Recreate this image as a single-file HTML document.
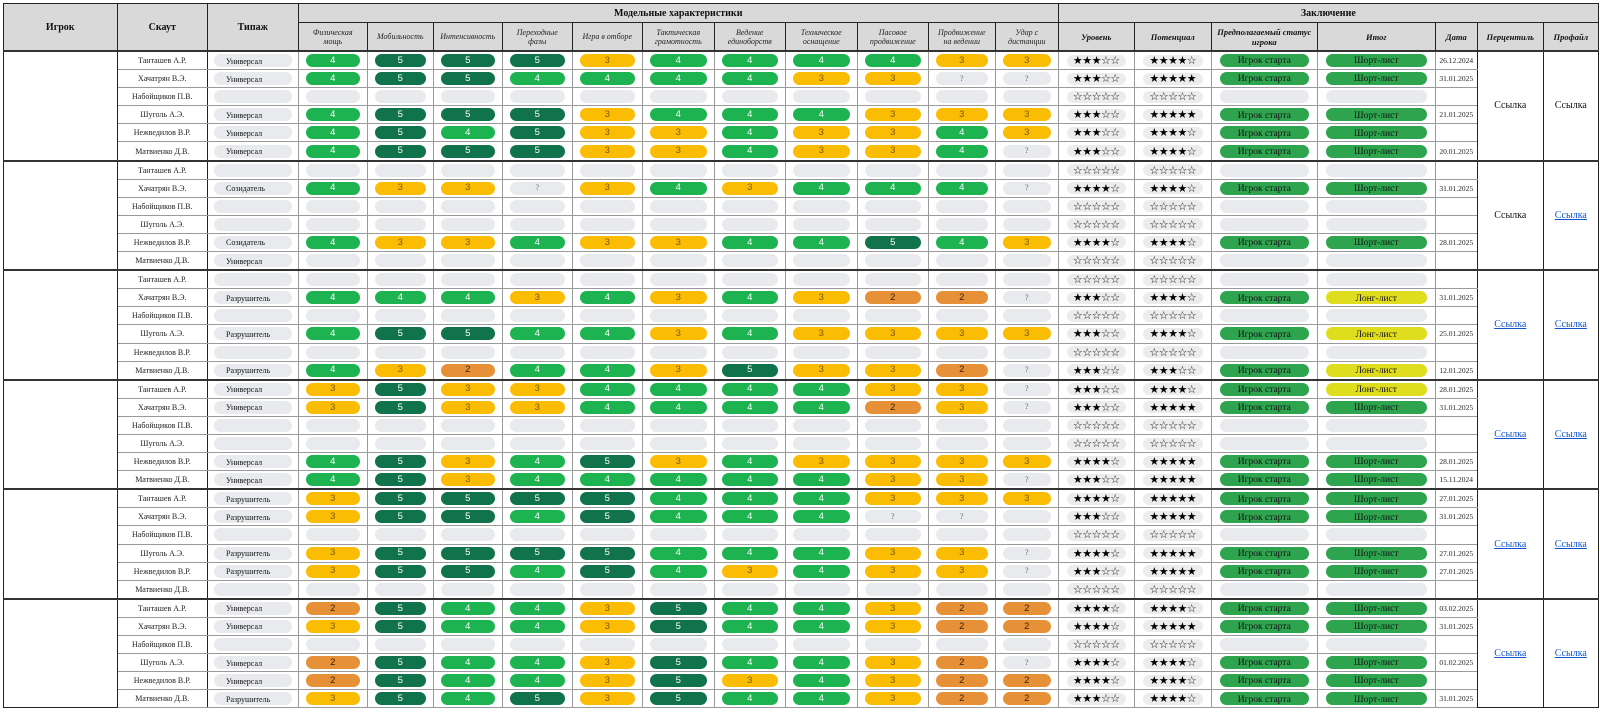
<!DOCTYPE html>
<html><head><meta charset="utf-8"><style>
html,body{margin:0;padding:0;background:#fff;width:1600px;height:712px;overflow:hidden}
table{position:absolute;left:3px;top:3px;border-collapse:collapse;table-layout:fixed;width:1594px;font-family:"Liberation Serif",serif;color:#111}
td,th{border:1px solid #9a9a9a;padding:0;text-align:center;vertical-align:middle;overflow:hidden;white-space:nowrap}
th{background:#d9d9d9;border:1px solid #222;font-weight:bold;font-size:10px}
th.h1{height:18px}
th.s{font-style:italic;font-weight:normal;font-size:8px;line-height:9px;white-space:normal;color:#222;height:27px;padding:0 5px}
th.sb{font-style:italic;font-weight:bold;font-size:8.5px;line-height:10px;white-space:normal;height:27px;padding:0 4px}
tr.r td{height:17.1px}
td.n{font-size:8px;color:#222;border-left:1px solid #222;border-right:1px solid #222}
td.dt{font-size:7.5px;color:#222;border-right:1px solid #222;border-left:1px solid #222}
td.big{border:1px solid #222;font-size:10px;background:#fff}
td.big a{color:#1155cc;text-decoration:underline}
tr.g td{border-top:2px solid #333}
i,u,b.s{display:flex;align-items:center;justify-content:center;box-sizing:border-box}
i{margin:0 7px;height:13px;border-radius:7px;font-style:normal;font-size:9.5px;line-height:1;font-family:"Liberation Sans",sans-serif;color:#fff}
i.e{background:#e8eaed;color:#666;font-family:"Liberation Serif",serif;font-size:8px}
i.c5{background:#11734b}
i.c4{background:#1db351}
i.c3{background:#fbbc04;color:#7a5a00}
i.c2{background:#e69138;color:#3a2000}
i.t{background:#e8eaed;color:#111;justify-content:flex-start;padding-left:12px;padding-top:2px;font-family:"Liberation Serif",serif;font-size:8px;margin:0 6px}
b.s{margin:0 8px;height:12px;border-radius:7px;background:#ececec;font-weight:normal;font-size:11px;line-height:1;color:#000;letter-spacing:-0.5px;font-family:"DejaVu Sans",sans-serif}
u{margin:0 8px;height:13px;border-radius:7px;text-decoration:none;font-size:9.5px;line-height:1;color:#111;padding-top:3px}
u.is,u.sh{background:#2ea44f}
u.ln{background:#e0dd1f}
u.e{background:#e8eaed}
</style></head><body>
<table>
<colgroup>
<col style="width:113.5px"><col style="width:90.5px"><col style="width:90.5px">
<col style="width:69.5px"><col style="width:65.5px"><col style="width:69.5px"><col style="width:69.5px"><col style="width:70.5px"><col style="width:71.5px"><col style="width:71.5px"><col style="width:71.5px"><col style="width:71.5px"><col style="width:66.5px"><col style="width:63.5px">
<col style="width:75.5px"><col style="width:77.5px"><col style="width:105.5px"><col style="width:118.5px"><col style="width:41.5px"><col style="width:66.5px"><col style="width:54.5px">
</colgroup>
<tr><th rowspan="2">Игрок</th><th rowspan="2">Скаут</th><th rowspan="2">Типаж</th><th colspan="11" class="h1">Модельные характеристики</th><th colspan="7">Заключение</th></tr>
<tr><th class="s">Физическая мощь</th><th class="s">Мобильность</th><th class="s">Интенсивность</th><th class="s">Переходные фазы</th><th class="s">Игра в отборе</th><th class="s">Тактическая грамотность</th><th class="s">Ведение единоборств</th><th class="s">Техническое оснащение</th><th class="s">Пасовое продвижение</th><th class="s">Продвижение на ведении</th><th class="s">Удар с дистанции</th><th class="sb">Уровень</th><th class="sb">Потенциал</th><th class="sb">Предполагаемый статус игрока</th><th class="sb">Итог</th><th class="sb">Дата</th><th class="sb">Перцентиль</th><th class="sb">Профайл</th></tr>

<!-- Group 1 -->
<tr class="r g"><td class="big" rowspan="6"></td><td class="n">Танташев А.Р.</td><td><i class="t">Универсал</i></td><td><i class="c4">4</i></td><td><i class="c5">5</i></td><td><i class="c5">5</i></td><td><i class="c5">5</i></td><td><i class="c3">3</i></td><td><i class="c4">4</i></td><td><i class="c4">4</i></td><td><i class="c4">4</i></td><td><i class="c4">4</i></td><td><i class="c3">3</i></td><td><i class="c3">3</i></td><td><b class="s">★★★☆☆</b></td><td><b class="s">★★★★☆</b></td><td><u class="is">Игрок старта</u></td><td><u class="sh">Шорт-лист</u></td><td class="dt">26.12.2024</td><td class="big" rowspan="6">Ссылка</td><td class="big" rowspan="6">Ссылка</td></tr>
<tr class="r"><td class="n">Хачатрян В.Э.</td><td><i class="t">Универсал</i></td><td><i class="c4">4</i></td><td><i class="c5">5</i></td><td><i class="c5">5</i></td><td><i class="c4">4</i></td><td><i class="c4">4</i></td><td><i class="c4">4</i></td><td><i class="c4">4</i></td><td><i class="c3">3</i></td><td><i class="c3">3</i></td><td><i class="e">?</i></td><td><i class="e">?</i></td><td><b class="s">★★★☆☆</b></td><td><b class="s">★★★★★</b></td><td><u class="is">Игрок старта</u></td><td><u class="sh">Шорт-лист</u></td><td class="dt">31.01.2025</td></tr>
<tr class="r"><td class="n">Набойщиков П.В.</td><td><i class="t"></i></td><td><i class="e"></i></td><td><i class="e"></i></td><td><i class="e"></i></td><td><i class="e"></i></td><td><i class="e"></i></td><td><i class="e"></i></td><td><i class="e"></i></td><td><i class="e"></i></td><td><i class="e"></i></td><td><i class="e"></i></td><td><i class="e"></i></td><td><b class="s">☆☆☆☆☆</b></td><td><b class="s">☆☆☆☆☆</b></td><td><u class="e"></u></td><td><u class="e"></u></td><td class="dt"></td></tr>
<tr class="r"><td class="n">Шуголь А.Э.</td><td><i class="t">Универсал</i></td><td><i class="c4">4</i></td><td><i class="c5">5</i></td><td><i class="c5">5</i></td><td><i class="c5">5</i></td><td><i class="c3">3</i></td><td><i class="c4">4</i></td><td><i class="c4">4</i></td><td><i class="c4">4</i></td><td><i class="c3">3</i></td><td><i class="c3">3</i></td><td><i class="c3">3</i></td><td><b class="s">★★★☆☆</b></td><td><b class="s">★★★★★</b></td><td><u class="is">Игрок старта</u></td><td><u class="sh">Шорт-лист</u></td><td class="dt">21.01.2025</td></tr>
<tr class="r"><td class="n">Нежведилов В.Р.</td><td><i class="t">Универсал</i></td><td><i class="c4">4</i></td><td><i class="c5">5</i></td><td><i class="c4">4</i></td><td><i class="c5">5</i></td><td><i class="c3">3</i></td><td><i class="c3">3</i></td><td><i class="c4">4</i></td><td><i class="c3">3</i></td><td><i class="c3">3</i></td><td><i class="c4">4</i></td><td><i class="c3">3</i></td><td><b class="s">★★★☆☆</b></td><td><b class="s">★★★★☆</b></td><td><u class="is">Игрок старта</u></td><td><u class="sh">Шорт-лист</u></td><td class="dt"></td></tr>
<tr class="r"><td class="n">Матвиенко Д.В.</td><td><i class="t">Универсал</i></td><td><i class="c4">4</i></td><td><i class="c5">5</i></td><td><i class="c5">5</i></td><td><i class="c5">5</i></td><td><i class="c3">3</i></td><td><i class="c3">3</i></td><td><i class="c4">4</i></td><td><i class="c3">3</i></td><td><i class="c3">3</i></td><td><i class="c4">4</i></td><td><i class="e">?</i></td><td><b class="s">★★★☆☆</b></td><td><b class="s">★★★★☆</b></td><td><u class="is">Игрок старта</u></td><td><u class="sh">Шорт-лист</u></td><td class="dt">20.01.2025</td></tr>

<!-- Group 2 -->
<tr class="r g"><td class="big" rowspan="6"></td><td class="n">Танташев А.Р.</td><td><i class="t"></i></td><td><i class="e"></i></td><td><i class="e"></i></td><td><i class="e"></i></td><td><i class="e"></i></td><td><i class="e"></i></td><td><i class="e"></i></td><td><i class="e"></i></td><td><i class="e"></i></td><td><i class="e"></i></td><td><i class="e"></i></td><td><i class="e"></i></td><td><b class="s">☆☆☆☆☆</b></td><td><b class="s">☆☆☆☆☆</b></td><td><u class="e"></u></td><td><u class="e"></u></td><td class="dt"></td><td class="big" rowspan="6">Ссылка</td><td class="big" rowspan="6"><a>Ссылка</a></td></tr>
<tr class="r"><td class="n">Хачатрян В.Э.</td><td><i class="t">Созидатель</i></td><td><i class="c4">4</i></td><td><i class="c3">3</i></td><td><i class="c3">3</i></td><td><i class="e">?</i></td><td><i class="c3">3</i></td><td><i class="c4">4</i></td><td><i class="c3">3</i></td><td><i class="c4">4</i></td><td><i class="c4">4</i></td><td><i class="c4">4</i></td><td><i class="e">?</i></td><td><b class="s">★★★★☆</b></td><td><b class="s">★★★★☆</b></td><td><u class="is">Игрок старта</u></td><td><u class="sh">Шорт-лист</u></td><td class="dt">31.01.2025</td></tr>
<tr class="r"><td class="n">Набойщиков П.В.</td><td><i class="t"></i></td><td><i class="e"></i></td><td><i class="e"></i></td><td><i class="e"></i></td><td><i class="e"></i></td><td><i class="e"></i></td><td><i class="e"></i></td><td><i class="e"></i></td><td><i class="e"></i></td><td><i class="e"></i></td><td><i class="e"></i></td><td><i class="e"></i></td><td><b class="s">☆☆☆☆☆</b></td><td><b class="s">☆☆☆☆☆</b></td><td><u class="e"></u></td><td><u class="e"></u></td><td class="dt"></td></tr>
<tr class="r"><td class="n">Шуголь А.Э.</td><td><i class="t"></i></td><td><i class="e"></i></td><td><i class="e"></i></td><td><i class="e"></i></td><td><i class="e"></i></td><td><i class="e"></i></td><td><i class="e"></i></td><td><i class="e"></i></td><td><i class="e"></i></td><td><i class="e"></i></td><td><i class="e"></i></td><td><i class="e"></i></td><td><b class="s">☆☆☆☆☆</b></td><td><b class="s">☆☆☆☆☆</b></td><td><u class="e"></u></td><td><u class="e"></u></td><td class="dt"></td></tr>
<tr class="r"><td class="n">Нежведилов В.Р.</td><td><i class="t">Созидатель</i></td><td><i class="c4">4</i></td><td><i class="c3">3</i></td><td><i class="c3">3</i></td><td><i class="c4">4</i></td><td><i class="c3">3</i></td><td><i class="c3">3</i></td><td><i class="c4">4</i></td><td><i class="c4">4</i></td><td><i class="c5">5</i></td><td><i class="c4">4</i></td><td><i class="c3">3</i></td><td><b class="s">★★★★☆</b></td><td><b class="s">★★★★☆</b></td><td><u class="is">Игрок старта</u></td><td><u class="sh">Шорт-лист</u></td><td class="dt">28.01.2025</td></tr>
<tr class="r"><td class="n">Матвиенко Д.В.</td><td><i class="t">Универсал</i></td><td><i class="e"></i></td><td><i class="e"></i></td><td><i class="e"></i></td><td><i class="e"></i></td><td><i class="e"></i></td><td><i class="e"></i></td><td><i class="e"></i></td><td><i class="e"></i></td><td><i class="e"></i></td><td><i class="e"></i></td><td><i class="e"></i></td><td><b class="s">☆☆☆☆☆</b></td><td><b class="s">☆☆☆☆☆</b></td><td><u class="e"></u></td><td><u class="e"></u></td><td class="dt"></td></tr>

<!-- Group 3 -->
<tr class="r g"><td class="big" rowspan="6"></td><td class="n">Танташев А.Р.</td><td><i class="t"></i></td><td><i class="e"></i></td><td><i class="e"></i></td><td><i class="e"></i></td><td><i class="e"></i></td><td><i class="e"></i></td><td><i class="e"></i></td><td><i class="e"></i></td><td><i class="e"></i></td><td><i class="e"></i></td><td><i class="e"></i></td><td><i class="e"></i></td><td><b class="s">☆☆☆☆☆</b></td><td><b class="s">☆☆☆☆☆</b></td><td><u class="e"></u></td><td><u class="e"></u></td><td class="dt"></td><td class="big" rowspan="6"><a>Ссылка</a></td><td class="big" rowspan="6"><a>Ссылка</a></td></tr>
<tr class="r"><td class="n">Хачатрян В.Э.</td><td><i class="t">Разрушитель</i></td><td><i class="c4">4</i></td><td><i class="c4">4</i></td><td><i class="c4">4</i></td><td><i class="c3">3</i></td><td><i class="c4">4</i></td><td><i class="c3">3</i></td><td><i class="c4">4</i></td><td><i class="c3">3</i></td><td><i class="c2">2</i></td><td><i class="c2">2</i></td><td><i class="e">?</i></td><td><b class="s">★★★☆☆</b></td><td><b class="s">★★★★☆</b></td><td><u class="is">Игрок старта</u></td><td><u class="ln">Лонг-лист</u></td><td class="dt">31.01.2025</td></tr>
<tr class="r"><td class="n">Набойщиков П.В.</td><td><i class="t"></i></td><td><i class="e"></i></td><td><i class="e"></i></td><td><i class="e"></i></td><td><i class="e"></i></td><td><i class="e"></i></td><td><i class="e"></i></td><td><i class="e"></i></td><td><i class="e"></i></td><td><i class="e"></i></td><td><i class="e"></i></td><td><i class="e"></i></td><td><b class="s">☆☆☆☆☆</b></td><td><b class="s">☆☆☆☆☆</b></td><td><u class="e"></u></td><td><u class="e"></u></td><td class="dt"></td></tr>
<tr class="r"><td class="n">Шуголь А.Э.</td><td><i class="t">Разрушитель</i></td><td><i class="c4">4</i></td><td><i class="c5">5</i></td><td><i class="c5">5</i></td><td><i class="c4">4</i></td><td><i class="c4">4</i></td><td><i class="c3">3</i></td><td><i class="c4">4</i></td><td><i class="c3">3</i></td><td><i class="c3">3</i></td><td><i class="c3">3</i></td><td><i class="c3">3</i></td><td><b class="s">★★★☆☆</b></td><td><b class="s">★★★★☆</b></td><td><u class="is">Игрок старта</u></td><td><u class="ln">Лонг-лист</u></td><td class="dt">25.01.2025</td></tr>
<tr class="r"><td class="n">Нежведилов В.Р.</td><td><i class="t"></i></td><td><i class="e"></i></td><td><i class="e"></i></td><td><i class="e"></i></td><td><i class="e"></i></td><td><i class="e"></i></td><td><i class="e"></i></td><td><i class="e"></i></td><td><i class="e"></i></td><td><i class="e"></i></td><td><i class="e"></i></td><td><i class="e"></i></td><td><b class="s">☆☆☆☆☆</b></td><td><b class="s">☆☆☆☆☆</b></td><td><u class="e"></u></td><td><u class="e"></u></td><td class="dt"></td></tr>
<tr class="r"><td class="n">Матвиенко Д.В.</td><td><i class="t">Разрушитель</i></td><td><i class="c4">4</i></td><td><i class="c3">3</i></td><td><i class="c2">2</i></td><td><i class="c4">4</i></td><td><i class="c4">4</i></td><td><i class="c3">3</i></td><td><i class="c5">5</i></td><td><i class="c3">3</i></td><td><i class="c3">3</i></td><td><i class="c2">2</i></td><td><i class="e">?</i></td><td><b class="s">★★★☆☆</b></td><td><b class="s">★★★☆☆</b></td><td><u class="is">Игрок старта</u></td><td><u class="ln">Лонг-лист</u></td><td class="dt">12.01.2025</td></tr>

<!-- Group 4 -->
<tr class="r g"><td class="big" rowspan="6"></td><td class="n">Танташев А.Р.</td><td><i class="t">Универсал</i></td><td><i class="c3">3</i></td><td><i class="c5">5</i></td><td><i class="c3">3</i></td><td><i class="c3">3</i></td><td><i class="c4">4</i></td><td><i class="c4">4</i></td><td><i class="c4">4</i></td><td><i class="c4">4</i></td><td><i class="c3">3</i></td><td><i class="c3">3</i></td><td><i class="e">?</i></td><td><b class="s">★★★☆☆</b></td><td><b class="s">★★★★☆</b></td><td><u class="is">Игрок старта</u></td><td><u class="ln">Лонг-лист</u></td><td class="dt">28.01.2025</td><td class="big" rowspan="6"><a>Ссылка</a></td><td class="big" rowspan="6"><a>Ссылка</a></td></tr>
<tr class="r"><td class="n">Хачатрян В.Э.</td><td><i class="t">Универсал</i></td><td><i class="c3">3</i></td><td><i class="c5">5</i></td><td><i class="c3">3</i></td><td><i class="c3">3</i></td><td><i class="c4">4</i></td><td><i class="c4">4</i></td><td><i class="c4">4</i></td><td><i class="c4">4</i></td><td><i class="c2">2</i></td><td><i class="c3">3</i></td><td><i class="e">?</i></td><td><b class="s">★★★☆☆</b></td><td><b class="s">★★★★★</b></td><td><u class="is">Игрок старта</u></td><td><u class="sh">Шорт-лист</u></td><td class="dt">31.01.2025</td></tr>
<tr class="r"><td class="n">Набойщиков П.В.</td><td><i class="t"></i></td><td><i class="e"></i></td><td><i class="e"></i></td><td><i class="e"></i></td><td><i class="e"></i></td><td><i class="e"></i></td><td><i class="e"></i></td><td><i class="e"></i></td><td><i class="e"></i></td><td><i class="e"></i></td><td><i class="e"></i></td><td><i class="e"></i></td><td><b class="s">☆☆☆☆☆</b></td><td><b class="s">☆☆☆☆☆</b></td><td><u class="e"></u></td><td><u class="e"></u></td><td class="dt"></td></tr>
<tr class="r"><td class="n">Шуголь А.Э.</td><td><i class="t"></i></td><td><i class="e"></i></td><td><i class="e"></i></td><td><i class="e"></i></td><td><i class="e"></i></td><td><i class="e"></i></td><td><i class="e"></i></td><td><i class="e"></i></td><td><i class="e"></i></td><td><i class="e"></i></td><td><i class="e"></i></td><td><i class="e"></i></td><td><b class="s">☆☆☆☆☆</b></td><td><b class="s">☆☆☆☆☆</b></td><td><u class="e"></u></td><td><u class="e"></u></td><td class="dt"></td></tr>
<tr class="r"><td class="n">Нежведилов В.Р.</td><td><i class="t">Универсал</i></td><td><i class="c4">4</i></td><td><i class="c5">5</i></td><td><i class="c3">3</i></td><td><i class="c4">4</i></td><td><i class="c5">5</i></td><td><i class="c3">3</i></td><td><i class="c4">4</i></td><td><i class="c3">3</i></td><td><i class="c3">3</i></td><td><i class="c3">3</i></td><td><i class="c3">3</i></td><td><b class="s">★★★★☆</b></td><td><b class="s">★★★★★</b></td><td><u class="is">Игрок старта</u></td><td><u class="sh">Шорт-лист</u></td><td class="dt">28.01.2025</td></tr>
<tr class="r"><td class="n">Матвиенко Д.В.</td><td><i class="t">Универсал</i></td><td><i class="c4">4</i></td><td><i class="c5">5</i></td><td><i class="c3">3</i></td><td><i class="c4">4</i></td><td><i class="c4">4</i></td><td><i class="c4">4</i></td><td><i class="c4">4</i></td><td><i class="c4">4</i></td><td><i class="c3">3</i></td><td><i class="c3">3</i></td><td><i class="e">?</i></td><td><b class="s">★★★☆☆</b></td><td><b class="s">★★★★★</b></td><td><u class="is">Игрок старта</u></td><td><u class="sh">Шорт-лист</u></td><td class="dt">15.11.2024</td></tr>

<!-- Group 5 -->
<tr class="r g"><td class="big" rowspan="6"></td><td class="n">Танташев А.Р.</td><td><i class="t">Разрушитель</i></td><td><i class="c3">3</i></td><td><i class="c5">5</i></td><td><i class="c5">5</i></td><td><i class="c5">5</i></td><td><i class="c5">5</i></td><td><i class="c4">4</i></td><td><i class="c4">4</i></td><td><i class="c4">4</i></td><td><i class="c3">3</i></td><td><i class="c3">3</i></td><td><i class="c3">3</i></td><td><b class="s">★★★★☆</b></td><td><b class="s">★★★★★</b></td><td><u class="is">Игрок старта</u></td><td><u class="sh">Шорт-лист</u></td><td class="dt">27.01.2025</td><td class="big" rowspan="6"><a>Ссылка</a></td><td class="big" rowspan="6"><a>Ссылка</a></td></tr>
<tr class="r"><td class="n">Хачатрян В.Э.</td><td><i class="t">Разрушитель</i></td><td><i class="c3">3</i></td><td><i class="c5">5</i></td><td><i class="c5">5</i></td><td><i class="c4">4</i></td><td><i class="c5">5</i></td><td><i class="c4">4</i></td><td><i class="c4">4</i></td><td><i class="c4">4</i></td><td><i class="e">?</i></td><td><i class="e">?</i></td><td><i class="e"></i></td><td><b class="s">★★★☆☆</b></td><td><b class="s">★★★★★</b></td><td><u class="is">Игрок старта</u></td><td><u class="sh">Шорт-лист</u></td><td class="dt">31.01.2025</td></tr>
<tr class="r"><td class="n">Набойщиков П.В.</td><td><i class="t"></i></td><td><i class="e"></i></td><td><i class="e"></i></td><td><i class="e"></i></td><td><i class="e"></i></td><td><i class="e"></i></td><td><i class="e"></i></td><td><i class="e"></i></td><td><i class="e"></i></td><td><i class="e"></i></td><td><i class="e"></i></td><td><i class="e"></i></td><td><b class="s">☆☆☆☆☆</b></td><td><b class="s">☆☆☆☆☆</b></td><td><u class="e"></u></td><td><u class="e"></u></td><td class="dt"></td></tr>
<tr class="r"><td class="n">Шуголь А.Э.</td><td><i class="t">Разрушитель</i></td><td><i class="c3">3</i></td><td><i class="c5">5</i></td><td><i class="c5">5</i></td><td><i class="c5">5</i></td><td><i class="c5">5</i></td><td><i class="c4">4</i></td><td><i class="c4">4</i></td><td><i class="c4">4</i></td><td><i class="c3">3</i></td><td><i class="c3">3</i></td><td><i class="e">?</i></td><td><b class="s">★★★★☆</b></td><td><b class="s">★★★★★</b></td><td><u class="is">Игрок старта</u></td><td><u class="sh">Шорт-лист</u></td><td class="dt">27.01.2025</td></tr>
<tr class="r"><td class="n">Нежведилов В.Р.</td><td><i class="t">Разрушитель</i></td><td><i class="c3">3</i></td><td><i class="c5">5</i></td><td><i class="c5">5</i></td><td><i class="c4">4</i></td><td><i class="c5">5</i></td><td><i class="c4">4</i></td><td><i class="c3">3</i></td><td><i class="c4">4</i></td><td><i class="c3">3</i></td><td><i class="c3">3</i></td><td><i class="e">?</i></td><td><b class="s">★★★☆☆</b></td><td><b class="s">★★★★★</b></td><td><u class="is">Игрок старта</u></td><td><u class="sh">Шорт-лист</u></td><td class="dt">27.01.2025</td></tr>
<tr class="r"><td class="n">Матвиенко Д.В.</td><td><i class="t"></i></td><td><i class="e"></i></td><td><i class="e"></i></td><td><i class="e"></i></td><td><i class="e"></i></td><td><i class="e"></i></td><td><i class="e"></i></td><td><i class="e"></i></td><td><i class="e"></i></td><td><i class="e"></i></td><td><i class="e"></i></td><td><i class="e"></i></td><td><b class="s">☆☆☆☆☆</b></td><td><b class="s">☆☆☆☆☆</b></td><td><u class="e"></u></td><td><u class="e"></u></td><td class="dt"></td></tr>

<!-- Group 6 -->
<tr class="r g"><td class="big" rowspan="6"></td><td class="n">Танташев А.Р.</td><td><i class="t">Универсал</i></td><td><i class="c2">2</i></td><td><i class="c5">5</i></td><td><i class="c4">4</i></td><td><i class="c4">4</i></td><td><i class="c3">3</i></td><td><i class="c5">5</i></td><td><i class="c4">4</i></td><td><i class="c4">4</i></td><td><i class="c3">3</i></td><td><i class="c2">2</i></td><td><i class="c2">2</i></td><td><b class="s">★★★★☆</b></td><td><b class="s">★★★★☆</b></td><td><u class="is">Игрок старта</u></td><td><u class="sh">Шорт-лист</u></td><td class="dt">03.02.2025</td><td class="big" rowspan="6"><a>Ссылка</a></td><td class="big" rowspan="6"><a>Ссылка</a></td></tr>
<tr class="r"><td class="n">Хачатрян В.Э.</td><td><i class="t">Универсал</i></td><td><i class="c3">3</i></td><td><i class="c5">5</i></td><td><i class="c4">4</i></td><td><i class="c4">4</i></td><td><i class="c3">3</i></td><td><i class="c5">5</i></td><td><i class="c4">4</i></td><td><i class="c4">4</i></td><td><i class="c3">3</i></td><td><i class="c2">2</i></td><td><i class="c2">2</i></td><td><b class="s">★★★★☆</b></td><td><b class="s">★★★★★</b></td><td><u class="is">Игрок старта</u></td><td><u class="sh">Шорт-лист</u></td><td class="dt">31.01.2025</td></tr>
<tr class="r"><td class="n">Набойщиков П.В.</td><td><i class="t"></i></td><td><i class="e"></i></td><td><i class="e"></i></td><td><i class="e"></i></td><td><i class="e"></i></td><td><i class="e"></i></td><td><i class="e"></i></td><td><i class="e"></i></td><td><i class="e"></i></td><td><i class="e"></i></td><td><i class="e"></i></td><td><i class="e"></i></td><td><b class="s">☆☆☆☆☆</b></td><td><b class="s">☆☆☆☆☆</b></td><td><u class="e"></u></td><td><u class="e"></u></td><td class="dt"></td></tr>
<tr class="r"><td class="n">Шуголь А.Э.</td><td><i class="t">Универсал</i></td><td><i class="c2">2</i></td><td><i class="c5">5</i></td><td><i class="c4">4</i></td><td><i class="c4">4</i></td><td><i class="c3">3</i></td><td><i class="c5">5</i></td><td><i class="c4">4</i></td><td><i class="c4">4</i></td><td><i class="c3">3</i></td><td><i class="c2">2</i></td><td><i class="e">?</i></td><td><b class="s">★★★★☆</b></td><td><b class="s">★★★★☆</b></td><td><u class="is">Игрок старта</u></td><td><u class="sh">Шорт-лист</u></td><td class="dt">01.02.2025</td></tr>
<tr class="r"><td class="n">Нежведилов В.Р.</td><td><i class="t">Универсал</i></td><td><i class="c2">2</i></td><td><i class="c5">5</i></td><td><i class="c4">4</i></td><td><i class="c4">4</i></td><td><i class="c3">3</i></td><td><i class="c5">5</i></td><td><i class="c3">3</i></td><td><i class="c4">4</i></td><td><i class="c3">3</i></td><td><i class="c2">2</i></td><td><i class="c2">2</i></td><td><b class="s">★★★★☆</b></td><td><b class="s">★★★★☆</b></td><td><u class="is">Игрок старта</u></td><td><u class="sh">Шорт-лист</u></td><td class="dt"></td></tr>
<tr class="r"><td class="n">Матвиенко Д.В.</td><td><i class="t">Разрушитель</i></td><td><i class="c3">3</i></td><td><i class="c5">5</i></td><td><i class="c4">4</i></td><td><i class="c5">5</i></td><td><i class="c3">3</i></td><td><i class="c5">5</i></td><td><i class="c4">4</i></td><td><i class="c4">4</i></td><td><i class="c3">3</i></td><td><i class="c2">2</i></td><td><i class="c2">2</i></td><td><b class="s">★★★☆☆</b></td><td><b class="s">★★★★☆</b></td><td><u class="is">Игрок старта</u></td><td><u class="sh">Шорт-лист</u></td><td class="dt">31.01.2025</td></tr>
</table>
</body></html>
